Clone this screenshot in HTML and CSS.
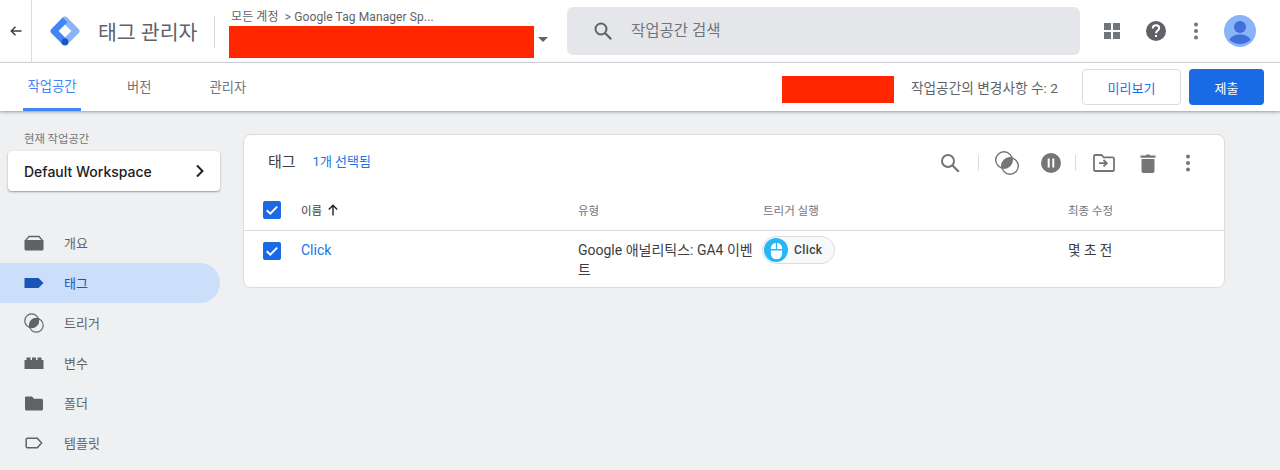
FILE: index.html
```html
<!DOCTYPE html>
<html lang="ko">
<head>
  <meta charset="utf-8">
  <title>태그 관리자</title>
  <link rel="stylesheet" href="styles.css">
</head>
<body>
  <header class="topbar">
    <div class="back">
      <svg width="14" height="14" viewBox="0 0 14 14"><path d="M12.5 7H2.5M6.5 2.8 2.3 7l4.2 4.2" fill="none" stroke="#3c4043" stroke-width="1.5"/></svg>
    </div>
    <div class="logo">
      <svg width="30" height="30" viewBox="0 0 30 30">
        <path d="M12.6 1.6a3.3 3.3 0 0 1 4.7 0l11.1 11.1a3.3 3.3 0 0 1 0 4.7L17.3 28.4l-4.7-4.7L21.4 15 12.6 6.3a3.3 3.3 0 0 1 0-4.7z" fill="#8ab4f8"/>
        <path d="M12.6 1.6 1.6 12.7a3.3 3.3 0 0 0 0 4.7l11 11 4.7-4.7L8.600 15l8.700-8.700-4.700-4.700z" fill="#4285f4"/>
        <circle cx="15" cy="26" r="3.400" fill="#1a56c4"/>
      </svg>
    </div>
    <div class="product">태그 관리자</div>
    <div class="account">
      <div class="crumb">모든 계정 &nbsp;&gt; Google Tag Manager Sp...</div>
      <div class="account-row">
        <div class="redact redact-name"></div>
        <div class="caret"></div>
      </div>
    </div>
    <div class="search">
      <svg width="24" height="24" viewBox="0 0 24 24"><circle cx="10" cy="10" r="5.500" fill="none" stroke="#5f6368" stroke-width="2"/><path d="m14.200 14.200 6 6" stroke="#5f6368" stroke-width="2.200"/></svg>
      <span>작업공간 검색</span>
    </div>
    <div class="top-icons">
      <svg width="24" height="24" viewBox="0 0 24 24"><path d="M4 4h7v7H4zM13 4h7v7h-7zM4 13h7v7H4zM13 13h7v7h-7z" fill="#70757a"/></svg>
      <svg width="24" height="24" viewBox="0 0 24 24"><circle cx="12" cy="12" r="10" fill="#5f6368"/><path d="M8.800 9.500c0-2 1.400-3.200 3.200-3.200s3.200 1.200 3.200 2.900c0 2.300-3.200 2.500-3.200 5" fill="none" stroke="#fff" stroke-width="2"/><rect x="11" y="16" width="2" height="2" fill="#fff"/></svg>
      <svg class="more" width="24" height="24" viewBox="0 0 24 24"><g fill="#70757a"><circle cx="12" cy="5.500" r="2"/><circle cx="12" cy="12" r="2"/><circle cx="12" cy="18.500" r="2"/></g></svg>
      <svg class="avatar" width="32" height="32" viewBox="0 0 32 32"><circle cx="16" cy="16" r="16" fill="#8ab4f8"/><circle cx="16" cy="12" r="6" fill="#3f6fd8"/><path d="M5.500 25c1.500-4 6-5.500 10.500-5.500S25 21 26.500 25a16 16 0 0 1-21 0z" fill="#3f6fd8"/></svg>
    </div>
  </header>

  <nav class="tabbar">
    <a class="tab tab-active">작업공간</a>
    <a class="tab tab-version">버전</a>
    <a class="tab tab-admin">관리자</a>
    <div class="tab-right">
      <div class="redact redact-env"></div>
      <span class="changes">작업공간의 변경사항 수: 2</span>
      <button class="btn btn-preview">미리보기</button>
      <button class="btn btn-submit">제출</button>
    </div>
  </nav>

  <div class="main">
    <aside class="sidebar">
      <div class="ws-label">현재 작업공간</div>
      <div class="ws-card">
        <span>Default Workspace</span>
        <svg width="12" height="14" viewBox="0 0 12 14"><path d="m3 1.500 5.500 5.500L3 12.500" fill="none" stroke="#202124" stroke-width="2"/></svg>
      </div>
      <ul class="menu">
        <li class="menu-item">
          <svg width="20" height="20" viewBox="0 0 20 20"><path d="M5 3.500h10l3.500 4.200H1.500z" fill="none" stroke="#5f6368" stroke-width="1.300"/><path d="M.5 7.500h19v8.500a1.500 1.500 0 0 1-1.500 1.500H2A1.500 1.500 0 0 1 .5 16z" fill="#5f6368"/></svg>
          개요
        </li>
        <li class="menu-item menu-active">
          <svg width="20" height="20" viewBox="0 0 20 20"><path d="M.5 5h14L19.500 10l-5 5H.5z" fill="#1a56b8"/></svg>
          태그
        </li>
        <li class="menu-item">
          <svg width="20" height="20" viewBox="0 0 20 20"><circle cx="7.700" cy="7.700" r="6.900" fill="none" stroke="#5f6368" stroke-width="1.200"/><circle cx="12.300" cy="12.300" r="6.900" fill="none" stroke="#5f6368" stroke-width="1.200"/><path d="M14.300 5.700A6.900 6.900 0 0 1 5.700 14.300 6.900 6.900 0 0 1 14.300 5.700z" fill="#5f6368"/></svg>
          트리거
        </li>
        <li class="menu-item">
          <svg width="20" height="20" viewBox="0 0 20 20"><path d="M.5 7h2V4.500h4V7h1.500V4.500h4V7H13.500V4.500h4V7h2v9H.5z" fill="#5f6368"/></svg>
          변수
        </li>
        <li class="menu-item">
          <svg width="20" height="20" viewBox="0 0 20 20"><path d="M2 3.500h6l2 2.200h7.500A1.500 1.500 0 0 1 19 7.200v8.800a1.500 1.500 0 0 1-1.500 1.500h-15A1.500 1.500 0 0 1 1 16V4.500a1 1 0 0 1 1-1z" fill="#5f6368"/></svg>
          폴더
        </li>
        <li class="menu-item">
          <svg width="20" height="20" viewBox="0 0 20 20"><path d="M3.500 5.200h9.800l4.300 4.800-4.300 4.800H3.500A1.300 1.300 0 0 1 2.200 13.500v-7a1.300 1.300 0 0 1 1.300-1.300z" fill="none" stroke="#5f6368" stroke-width="1.500"/></svg>
          템플릿
        </li>
      </ul>
    </aside>

    <section class="card">
      <div class="card-head">
        <span class="card-title">태그</span>
        <span class="selected">1개 선택됨</span>
        <div class="tools">
          <svg width="24" height="24" viewBox="0 0 24 24"><circle cx="10" cy="10" r="6" fill="none" stroke="#757575" stroke-width="2"/><path d="m14.500 14.500 6.300 6.300" stroke="#757575" stroke-width="2.200"/></svg>
          <i class="tool-sep"></i>
          <svg width="24" height="24" viewBox="0 0 24 24"><circle cx="9" cy="9" r="8.300" fill="none" stroke="#757575" stroke-width="1.400"/><circle cx="15" cy="15" r="8.300" fill="none" stroke="#757575" stroke-width="1.400"/><path d="M17 7A8.300 8.300 0 0 1 7 17 8.300 8.300 0 0 1 17 7z" fill="#757575"/></svg>
          <svg class="tool-pause" width="24" height="24" viewBox="0 0 24 24"><circle cx="12" cy="12" r="10" fill="#757575"/><path d="M8.700 7.500h2v9h-2zM13.300 7.500h2v9h-2z" fill="#fff"/></svg>
          <i class="tool-sep tool-sep-near"></i>
          <svg width="24" height="24" viewBox="0 0 24 24"><path d="M2.900 4h6.600l2.200 2.300h9A1.300 1.300 0 0 1 22 7.600v11.100A1.300 1.300 0 0 1 20.700 20H3.300A1.300 1.300 0 0 1 2 18.700V4.900z" fill="none" stroke="#757575" stroke-width="1.800"/><path d="M7 12.200h7.500M11.500 9l3.300 3.200-3.300 3.200" fill="none" stroke="#757575" stroke-width="1.800"/></svg>
          <svg class="tool-trash" width="24" height="24" viewBox="0 0 24 24"><path d="M5.500 8h13v12a2 2 0 0 1-2 2h-9a2 2 0 0 1-2-2zM4.500 4.500h5l1-1h3l1 1h5v2.200h-15z" fill="#757575"/></svg>
          <svg width="24" height="24" viewBox="0 0 24 24"><g fill="#757575"><circle cx="12" cy="5.500" r="2"/><circle cx="12" cy="12" r="2"/><circle cx="12" cy="18.500" r="2"/></g></svg>
        </div>
      </div>

      <div class="row row-head">
        <div class="col-check"><span class="check"><svg width="18" height="18" viewBox="0 0 18 18"><path d="m3.800 9.200 3.500 3.400 6.900-7" fill="none" stroke="#fff" stroke-width="2"/></svg></span></div>
        <div class="col-name name-head">이름
          <svg width="14" height="14" viewBox="0 0 14 14"><path d="M7 12.500V2.500M2.800 6.500 7 2.300l4.200 4.200" fill="none" stroke="#202124" stroke-width="1.400"/></svg>
        </div>
        <div class="col-type">유형</div>
        <div class="col-trigger">트리거 실행</div>
        <div class="col-date">최종 수정</div>
      </div>

      <div class="row row-body">
        <div class="col-check"><span class="check check-body"><svg width="18" height="18" viewBox="0 0 18 18"><path d="m3.800 9.200 3.500 3.400 6.900-7" fill="none" stroke="#fff" stroke-width="2"/></svg></span></div>
        <div class="col-name"><a class="tag-link">Click</a></div>
        <div class="col-type">Google 애널리틱스: GA4 이벤트</div>
        <div class="col-trigger">
          <span class="chip">
            <span class="chip-icon">
              <svg width="14" height="18" viewBox="0 0 14 18"><path d="M6.300 1v6.500H1V6a5.300 5.300 0 0 1 5.300-5zM7.700 1A5.300 5.300 0 0 1 13 6v1.500H7.700zM1 9h12v3.500a6 6 0 0 1-12 0z" fill="#fff"/></svg>
            </span>
            Click
          </span>
        </div>
        <div class="col-date">몇 초 전</div>
      </div>
    </section>
  </div>
</body>
</html>
```

FILE: styles.css
```css
* {
  box-sizing: border-box;
}

html, body {
  margin: 0;
  height: 470px;
  overflow: hidden;
}

body {
  background-color: #eff0f2;
  font-family: Roboto, "Noto Sans CJK KR", sans-serif;
  color: #3c4043;
}

.topbar {
  display: flex;
  align-items: center;
  height: 63px;
  background-color: #fff;
  border-bottom: 1px solid #dadce0;
}

.back {
  display: flex;
  align-items: center;
  justify-content: center;
  width: 32px;
  height: 62px;
  border-right: 1px solid #dadce0;
}

.logo {
  display: flex;
  margin-left: 18px;
}

.product {
  width: 116px;
  margin-left: 18px;
  font-size: 20.500px;
  color: #5f6368;
  white-space: nowrap;
}

.account {
  width: 353px;
  height: 60px;
  padding: 8px 0 0 15px;
  position: relative;
}

.account::before {
  content: "";
  position: absolute;
  left: 0;
  top: 15px;
  height: 32px;
  width: 1px;
  background-color: #dadce0;
}

.crumb {
  height: 17px;
  padding-left: 2px;
  font-size: 12px;
  letter-spacing: 0.1px;
  line-height: 17px;
  color: #5f6368;
  white-space: nowrap;
}

.account-row {
  display: flex;
  align-items: center;
}

.redact {
  background-color: #ff2600;
}

.redact-name {
  width: 305px;
  height: 32px;
}

.caret {
  width: 0;
  height: 0;
  margin: -5px 0 0 4px;
  border-left: 5px solid transparent;
  border-right: 5px solid transparent;
  border-top: 5px solid #5f6368;
}

.search {
  display: flex;
  align-items: center;
  gap: 16px;
  width: 513px;
  height: 48px;
  padding-left: 24px;
  border-radius: 6px;
  background-color: #e5e6ea;
  font-size: 15.500px;
  color: #70757a;
}

.search span {
  margin-top: -4px;
}

.top-icons {
  display: flex;
  align-items: center;
  gap: 20px;
  margin-left: 20px;
}

.more {
  margin-left: -4px;
}

.avatar {
  margin-left: -4px;
}

.tabbar {
  display: flex;
  align-items: stretch;
  height: 48px;
  padding-left: 23px;
  background-color: #fff;
  box-shadow: 0 1px 3px rgba(60, 64, 67, 0.5);
  position: relative;
}

.tab {
  display: flex;
  align-items: center;
  height: 48px;
  font-size: 13.300px;
  color: #70757a;
  padding-bottom: 2px;
}

.tab-active {
  width: 58px;
  justify-content: center;
  color: #4285f4;
  border-bottom: 3px solid #4285f4;
  padding-bottom: 0;
}

.tab-version {
  margin-left: 46px;
}

.tab-admin {
  margin-left: 58px;
}

.tab-right {
  display: flex;
  align-items: center;
  margin-left: auto;
  padding-right: 16px;
}

.redact-env {
  width: 112px;
  height: 27px;
  margin-top: 4px;
}

.changes {
  margin: 0 24px 0 17px;
  font-size: 13.700px;
  color: #5f6368;
}

.btn {
  height: 36px;
  border-radius: 4px;
  font-family: inherit;
  font-size: 13px;
  padding: 0;
}

.btn-preview {
  width: 99px;
  background-color: #fff;
  border: 1px solid #dadce0;
  color: #1a73e8;
}

.btn-submit {
  width: 75px;
  margin-left: 8px;
  background-color: #1a6ae6;
  border: none;
  color: #fff;
}

.main {
  display: flex;
  align-items: flex-start;
}

.sidebar {
  width: 243px;
  padding-top: 22px;
}

.ws-label {
  margin-left: 24px;
  font-size: 11.300px;
  line-height: 14px;
  color: #70757a;
}

.ws-card {
  display: flex;
  align-items: center;
  justify-content: space-between;
  width: 212px;
  height: 40px;
  margin: 4px 0 0 8px;
  padding: 0 14px 0 16px;
  border-radius: 4px;
  background-color: #fff;
  box-shadow: 0 1px 2px rgba(60, 64, 67, 0.5);
  font-family: Inter, sans-serif;
  font-size: 14px;
  font-weight: 500;
  color: #202124;
}

.menu {
  width: 220px;
  margin: 32px 0 0;
  padding: 0;
  list-style: none;
}

.menu-item {
  display: flex;
  align-items: center;
  gap: 20px;
  height: 40px;
  padding: 0 0 2px 24px;
  font-size: 13px;
  color: #5f6368;
}

.menu-item svg {
  margin-top: 2px;
}

.menu-active {
  background-color: #cbdffb;
  border-radius: 0 20px 20px 0;
  color: #1a56b8;
}

.card {
  width: 982px;
  height: 154px;
  margin-top: 23px;
  background-color: #fff;
  border: 1px solid #dadce0;
  border-radius: 8px;
}

.card-head {
  display: flex;
  align-items: center;
  height: 54px;
  padding: 0 24px;
}

.card-title {
  margin-bottom: 4px;
  font-size: 15px;
  color: #3c4043;
}

.selected {
  margin: 0 0 4px 17px;
  font-size: 13px;
  color: #1a73e8;
}

.tools {
  display: flex;
  align-items: center;
  margin: 2px 0 0 auto;
  gap: 16px;
}

.tool-sep {
  width: 1px;
  height: 16px;
  background-color: #dadce0;
}

.tool-sep-near {
  margin-left: -4px;
}

.tool-pause {
  margin-left: 4px;
}

.tool-trash {
  margin-left: 4px;
}

.row {
  display: flex;
}

.row-head {
  align-items: center;
  height: 42px;
  border-bottom: 1px solid #dadce0;
  font-size: 11.500px;
  color: #70757a;
}

.row-body {
  padding-top: 9px;
  font-size: 14px;
  line-height: 20px;
}

.col-check {
  width: 57px;
  padding-left: 19px;
}

.check {
  display: block;
  width: 18px;
  height: 18px;
  border-radius: 2px;
  background-color: #1a6ae6;
}

.check-body {
  margin-top: 2px;
}

.col-name {
  width: 277px;
}

.name-head {
  display: flex;
  align-items: center;
  gap: 4px;
  color: #3c4043;
}

.tag-link {
  font-size: 14px;
  color: #1a73e8;
}

.col-type {
  width: 185px;
  padding-right: 4px;
}

.col-trigger {
  width: 305px;
}

.chip {
  display: inline-flex;
  align-items: center;
  gap: 6px;
  width: 73px;
  height: 28px;
  margin: -4px 0 0 -1px;
  padding: 0 1px;
  border: 1px solid #dadce0;
  border-radius: 14px;
  background-color: #f8f9fa;
  font-size: 12px;
  font-weight: 500;
  letter-spacing: 0.4px;
  color: #3c4043;
}

.chip-icon {
  display: flex;
  align-items: center;
  justify-content: center;
  width: 24px;
  height: 24px;
  border-radius: 50%;
  background-color: #29b6f6;
}

.chip-icon svg {
  width: 13px;
  height: 17px;
}

.col-date {
  flex: 1;
  font-size: 13.600px;
}

.row-head .col-date {
  font-size: 11.500px;
}
```
